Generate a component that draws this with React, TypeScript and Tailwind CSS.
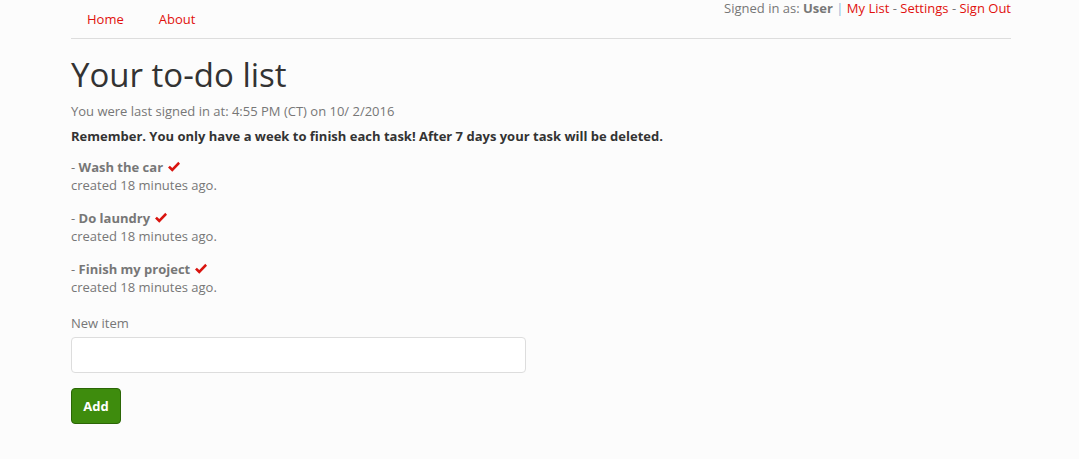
import { useState } from 'react';

const tasks = ['Wash the car', 'Do laundry', 'Finish my project'];

function Check() {
    return (
        <svg viewBox="0 0 16 14" className="inline-block w-[14px] h-[12px] ml-[4px] -mt-[3px]" aria-hidden>
            <path d="M1 7.5 L3.2 5.4 L6 8.2 L13 1 L15 3.2 L6 12.4 Z" fill="#d9140f" />
        </svg>
    );
}

export default function App() {
    const [item, setItem] = useState('');

    return (
        <div className="min-h-[459px] bg-[#fcfcfc] text-[#777] text-[13px] leading-[18px]" style={{ fontFamily: '"Open Sans", sans-serif' }}>
            <div className="w-[940px] ml-[71px]">
                {/* Nav */}
                <div className="flex justify-between border-b border-[#ddd] h-[39px]">
                    <ul className="flex gap-[35px] pl-[16px] pt-[10px]">
                        <li><a href="#" className="text-[#e1110d]">Home</a></li>
                        <li><a href="#" className="text-[#e1110d]">About</a></li>
                    </ul>
                    <div className="-mt-[1px]">
                        Signed in as: <strong className="font-bold">User</strong>{' '}
                        <span className="text-[#8fb6d9]">|</span>{' '}
                        <a href="#" className="text-[#e1110d]">My List</a> -{' '}
                        <a href="#" className="text-[#e1110d]">Settings</a> -{' '}
                        <a href="#" className="text-[#e1110d]">Sign Out</a>
                    </div>
                </div>

                <h1 className="text-[33px] leading-[40px] text-[#333] mt-[16px] mb-[7px]">Your to-do list</h1>
                <p className="mb-[7px]">You were last signed in at: 4:55 PM (CT) on 10/ 2/2016</p>
                <p className="font-bold text-[#333] mb-[13px]">
                    Remember. You only have a week to finish each task! After 7 days your task will be deleted.
                </p>

                <div className="space-y-[15px]">
                    {tasks.map((t) => (
                        <div key={t}>
                            <div>- <strong className="font-bold">{t}</strong><Check /></div>
                            <div>created 18 minutes ago.</div>
                        </div>
                    ))}
                </div>

                <label className="block mt-[18px] mb-[5px]">New item</label>
                <input
                    type="text"
                    value={item}
                    onChange={(e) => setItem(e.target.value)}
                    className="block w-[455px] h-[36px] bg-white border border-[#ddd] rounded-[4px] px-[10px] outline-none"
                />
                <button
                    type="button"
                    className="mt-[15px] w-[50px] h-[36px] bg-[#3e8c0d] border border-[#2b6606] rounded-[4px] text-white font-bold"
                >
                    Add
                </button>
            </div>
        </div>
    );
}
